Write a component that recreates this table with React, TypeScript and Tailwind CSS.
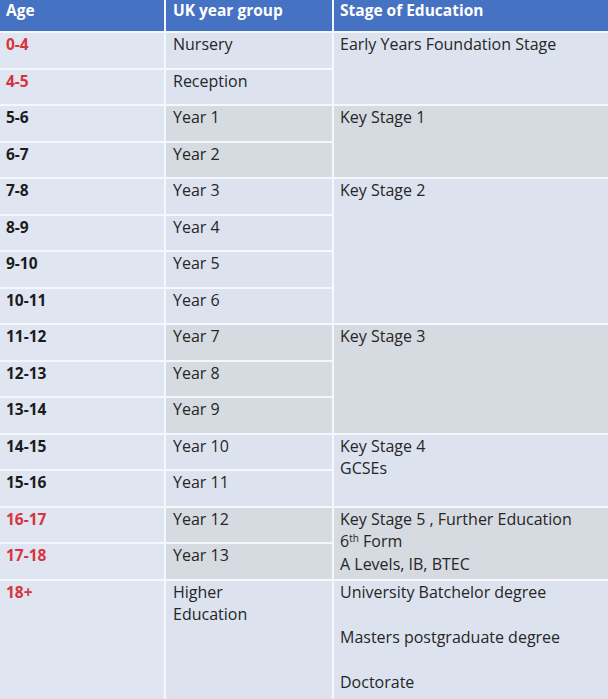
import React from "react";

type Row = { age: string; red?: boolean; year: React.ReactNode };
type Group = { rows: Row[]; stage: React.ReactNode; grey: boolean; span: string };

const groups: Group[] = [
  {
    rows: [
      { age: "0-4", red: true, year: "Nursery" },
      { age: "4-5", red: true, year: "Reception" },
    ],
    stage: "Early Years Foundation Stage",
    grey: false,
    span: "row-span-2",
  },
  {
    rows: [
      { age: "5-6", year: "Year 1" },
      { age: "6-7", year: "Year 2" },
    ],
    stage: "Key Stage 1",
    grey: true,
    span: "row-span-2",
  },
  {
    rows: [
      { age: "7-8", year: "Year 3" },
      { age: "8-9", year: "Year 4" },
      { age: "9-10", year: "Year 5" },
      { age: "10-11", year: "Year 6" },
    ],
    stage: "Key Stage 2",
    grey: false,
    span: "row-span-4",
  },
  {
    rows: [
      { age: "11-12", year: "Year 7" },
      { age: "12-13", year: "Year 8" },
      { age: "13-14", year: "Year 9" },
    ],
    stage: "Key Stage 3",
    grey: true,
    span: "row-span-3",
  },
  {
    rows: [
      { age: "14-15", year: "Year 10" },
      { age: "15-16", year: "Year 11" },
    ],
    stage: (
      <>
        Key Stage 4
        <br />
        GCSEs
      </>
    ),
    grey: false,
    span: "row-span-2",
  },
  {
    rows: [
      { age: "16-17", red: true, year: "Year 12" },
      { age: "17-18", red: true, year: "Year 13" },
    ],
    stage: (
      <>
        Key Stage 5 , Further Education
        <br />
        6<sup className="text-[10px]">th</sup> Form
        <br />
        A Levels, IB, BTEC
      </>
    ),
    grey: true,
    span: "row-span-2",
  },
  {
    rows: [
      {
        age: "18+",
        red: true,
        year: (
          <>
            Higher
            <br />
            Education
          </>
        ),
      },
    ],
    stage: (
      <>
        University Batchelor degree
        <br />
        <br />
        Masters postgraduate degree
        <br />
        <br />
        Doctorate
      </>
    ),
    grey: false,
    span: "row-span-1",
  },
];

export default function App() {
  const cells: React.ReactNode[] = [];
  groups.forEach((g, gi) => {
    const bg = g.grey ? "bg-[#d6dae1]" : "bg-[#dce3ef]";
    g.rows.forEach((r, ri) => {
      cells.push(
        <div
          key={`a${gi}-${ri}`}
          className={`bg-[#dfe5f1] pl-[6px] pt-0 text-[15.5px] font-bold ${
            r.red ? "text-[#d8343c]" : "text-[#1c1c1c]"
          }`}
        >
          {r.age}
        </div>
      );
      cells.push(
        <div key={`y${gi}-${ri}`} className={`${bg} pl-[7px] pt-0 text-[#262626]`}>
          {r.year}
        </div>
      );
      if (ri === 0) {
        cells.push(
          <div key={`s${gi}`} className={`${bg} ${g.span} pl-[6px] pt-0 text-[#262626]`}>
            {g.stage}
          </div>
        );
      }
    });
  });

  return (
    <div
      className="grid h-[699px] w-[608px] grid-cols-[164px_166px_1fr] grid-rows-[31px_repeat(15,34.5px)_1fr] gap-[2px] overflow-hidden bg-[#f4f7fc] text-[16px] leading-[22.5px]"
      style={{ fontFamily: '"Open Sans", "Noto Sans", sans-serif' }}
    >
      <div className="bg-[#4672c4] pl-[6px] text-[15.5px] font-bold leading-[20px] text-white">Age</div>
      <div className="bg-[#4672c4] pl-[7px] text-[15.5px] font-bold leading-[20px] text-white">UK year group</div>
      <div className="bg-[#4672c4] pl-[6px] text-[15.5px] font-bold leading-[20px] text-white">Stage of Education</div>
      {cells}
    </div>
  );
}
